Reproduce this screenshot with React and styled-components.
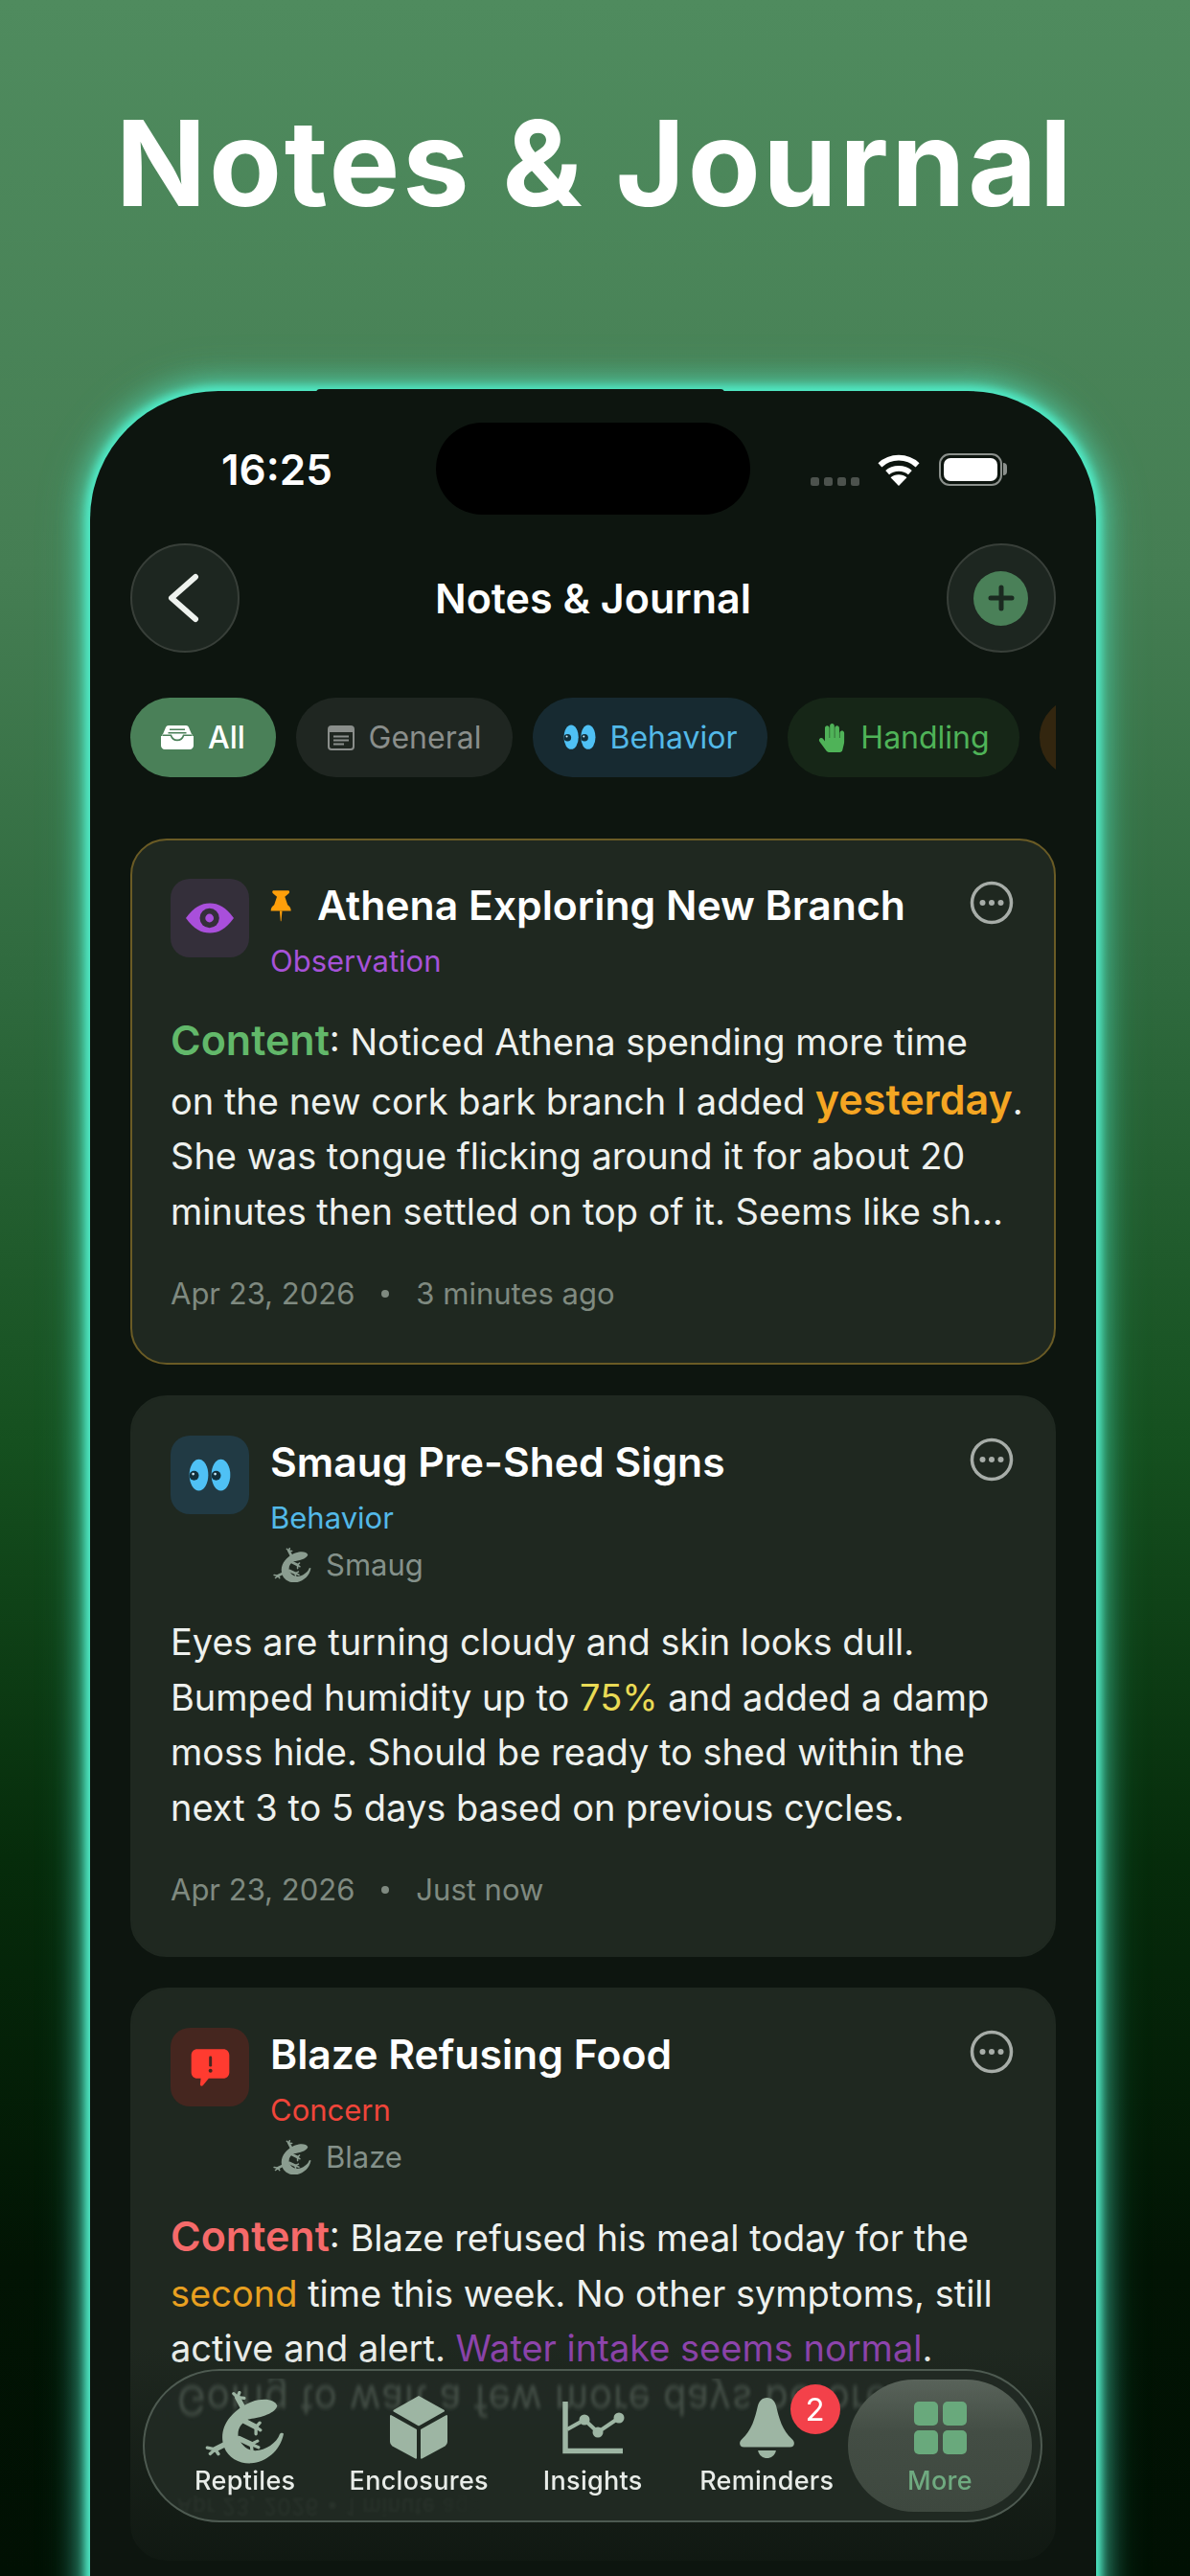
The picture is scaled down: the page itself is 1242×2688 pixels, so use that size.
import React from "react";
import styled, { createGlobalStyle } from "styled-components";
import { FaHandPaper } from "react-icons/fa";

const Global = createGlobalStyle`
  html, body { margin: 0; padding: 0; background: #020f04; }
  * { box-sizing: border-box; }
  body { font-family: Inter, "Noto Sans", sans-serif; -webkit-font-smoothing: antialiased; }
`;

const Page = styled.div`
  width: 1242px;
  height: 2688px;
  overflow: hidden;
  display: flex;
  flex-direction: column;
  background: linear-gradient(180deg, #4f8b5e 0%, #457e53 22%, #2f6a3e 38%, #15501f 56%, #062c0b 72%, #021404 88%, #011003 100%);
`;
const Headline = styled.h1`
  margin: 0;
  height: 408px;
  flex: none;
  padding-top: 100px;
  text-align: center;
  color: #fff;
  font-size: 124px;
  line-height: 140px;
  font-weight: 700;
  letter-spacing: 2.7px;
`;
const Phone = styled.div`
  position: relative;
  flex: none;
  width: 1050px;
  height: 2320px;
  margin-left: 94px;
  background: #0d150f;
  border-radius: 134px 134px 0 0;
  box-shadow: 0 0 9px 5px #50ecc8, 0 0 24px 11px rgba(80, 236, 200, 0.55), 0 0 44px 15px rgba(80, 236, 200, 0.22);
  &::before {
    content: "";
    position: absolute;
    top: -2px;
    left: 236px;
    width: 426px;
    height: 6px;
    border-radius: 4px 4px 0 0;
    background: #0d150f;
  }
`;
const Island = styled.div`
  position: absolute;
  top: 33px;
  left: 361px;
  width: 328px;
  height: 96px;
  border-radius: 48px;
  background: #000;
`;
const StatusBar = styled.div`
  height: 159px;
  padding: 55px 91px 0 137px;
  display: flex;
  justify-content: space-between;
  align-items: flex-start;
  color: #fff;
`;
const Time = styled.span`
  font-size: 44px;
  line-height: 54px;
  font-weight: 600;
`;
const StatusIcons = styled.div`
  display: flex;
  align-items: center;
  height: 54px;
  gap: 18px;
`;
const SignalDots = styled.div`
  display: flex;
  gap: 5px;
  margin-top: 24px;
`;
const SignalDot = styled.i`
  width: 9px;
  height: 9px;
  border-radius: 2.5px;
  background: #4c524d;
`;
const Battery = styled.div`
  position: relative;
  width: 66px;
  height: 34px;
  padding: 3px;
  border: 2px solid #8b908c;
  border-radius: 11px;
  margin-left: 1px;
  margin-right: 7px;
  &::before {
    content: "";
    display: block;
    height: 100%;
    border-radius: 7px;
    background: #fff;
  }
  &::after {
    content: "";
    position: absolute;
    right: -7px;
    top: 8px;
    width: 4px;
    height: 13px;
    border-radius: 0 4px 4px 0;
    background: #8b908c;
  }
`;
const NavBar = styled.div`
  height: 114px;
  margin: 0 42px;
  display: flex;
  align-items: center;
  justify-content: space-between;
`;
const NavTitle = styled.div`
  color: #fff;
  font-size: 43px;
  line-height: 54px;
  font-weight: 600;
`;
const RoundButton = styled.div`
  width: 114px;
  height: 114px;
  border-radius: 50%;
  background: #1d2620;
  border: 2px solid #383f39;
  display: flex;
  align-items: center;
  justify-content: center;
`;
const PlusDisc = styled.div`
  width: 57px;
  height: 57px;
  border-radius: 50%;
  background: #4a8058;
  display: flex;
  align-items: center;
  justify-content: center;
`;
const ChipRow = styled.div`
  margin: 47px 42px 0;
  display: flex;
  gap: 21px;
  overflow: hidden;
`;
const Chip = styled.div`
  flex: none;
  height: 83px;
  width: ${(p) => p.$w}px;
  border-radius: 42px;
  background: ${(p) => p.$bg};
  color: ${(p) => p.$fg};
  display: flex;
  align-items: center;
  justify-content: center;
  gap: ${(p) => p.$gap || 15}px;
  font-size: 32px;
  font-weight: ${(p) => p.$weight || 400};
`;
const CardList = styled.div`
  margin: 64px 42px 0;
  display: flex;
  flex-direction: column;
  gap: 32px;
`;
const Card = styled.article`
  position: relative;
  flex: none;
  border-radius: 38px;
  background: #1f2820;
  border: 2px solid ${(p) => (p.$pinned ? "#6a5b25" : "#1f2820")};
  padding: 40px 40px ${(p) => p.$bottom || 46}px;
`;
const CardHead = styled.div`
  display: flex;
  gap: 22px;
  align-items: flex-start;
`;
const IconTile = styled.div`
  flex: none;
  width: 82px;
  height: 82px;
  border-radius: 20px;
  background: ${(p) => p.$bg};
  display: flex;
  align-items: center;
  justify-content: center;
`;
const HeadText = styled.div`
  flex: 1;
  min-width: 0;
  display: flex;
  flex-direction: column;
`;
const TitleRow = styled.div`
  display: flex;
  align-items: center;
  gap: 26px;
  height: 56px;
`;
const Title = styled.h2`
  margin: 0;
  color: #fff;
  font-size: 42.7px;
  line-height: 56px;
  font-weight: 600;
  white-space: nowrap;
`;
const Kebab = styled.svg`
  position: absolute;
  top: 42px;
  right: 42px;
`;
const Kind = styled.div`
  margin-top: 10px;
  color: ${(p) => p.$c};
  font-size: 31px;
  line-height: 40px;
`;
const PetRow = styled.div`
  display: flex;
  align-items: center;
  gap: 15px;
  margin-top: 8px;
  padding-left: 3px;
  color: #84918a;
  font-size: 31px;
  line-height: 42px;
`;
const Body = styled.p`
  margin: ${(p) => p.$top}px 0 0;
  color: #eef1ee;
  font-size: 38px;
  line-height: 57.5px;
  white-space: nowrap;
`;
const Big = styled.span`
  color: ${(p) => p.$c};
  font-size: 43px;
  font-weight: 600;
  line-height: 1.4;
`;
const Tint = styled.span`
  color: ${(p) => p.$c};
`;
const Meta = styled.div`
  margin-top: 35px;
  display: flex;
  align-items: center;
  gap: 28px;
  color: #7f8a80;
  font-size: 31px;
  line-height: 44px;
`;
const MetaDot = styled.i`
  width: 8px;
  height: 8px;
  border-radius: 50%;
  background: #7f8a80;
`;
const Fade = styled.div`
  position: absolute;
  left: 0;
  right: 0;
  bottom: 40px;
  height: 240px;
  background: linear-gradient(180deg, rgba(13, 21, 15, 0) 0%, rgba(13, 21, 15, 0.35) 35%, rgba(13, 21, 15, 0.85) 100%);
`;
const TabBar = styled.nav`
  position: absolute;
  left: 55px;
  top: 2064px;
  width: 939px;
  height: 160px;
  padding: 9px 9px 9px 14px;
  border-radius: 80px;
  overflow: hidden;
  border: 2px solid rgba(175, 195, 180, 0.32);
  background: rgba(33, 42, 35, 0.93);
  backdrop-filter: blur(14px);
  display: grid;
  grid-template-columns: repeat(4, 181.5px) 1fr;
`;
const Mirror = styled.span`
  position: absolute;
  left: ${(p) => p.$x}px;
  top: ${(p) => p.$y}px;
  transform: scaleY(-1.1);
  font-size: ${(p) => p.$size}px;
  line-height: 1;
  letter-spacing: ${(p) => p.$track}px;
  white-space: nowrap;
  color: ${(p) => p.$c};
  filter: blur(${(p) => p.$blur}px);
  mask-image: linear-gradient(90deg, #000 82%, transparent 100%);
`;
const Tab = styled.div`
  position: relative;
  display: flex;
  flex-direction: column;
  align-items: center;
  padding-top: 10px;
  margin-left: ${(p) => (p.$active ? "-6px" : "0")};
  border-radius: 70px;
  color: ${(p) => (p.$active ? "#6faa80" : "#e8ece8")};
  background: ${(p) => (p.$active ? "linear-gradient(180deg, #59635a 0%, #434d44 40%, #3e483f 100%)" : "transparent")};
`;
const TabIcon = styled.div`
  height: 80px;
  display: flex;
  align-items: center;
  justify-content: center;
  color: #9db5a3;
`;
const TabLabel = styled.span`
  font-size: 27px;
  line-height: 32px;
  font-weight: 500;
  letter-spacing: 0.3px;
`;
const Badge = styled.span`
  position: absolute;
  top: 5px;
  left: 115px;
  width: 52px;
  height: 52px;
  border-radius: 50%;
  background: #f3414a;
  color: #fff;
  font-size: 33px;
  line-height: 52px;
  text-align: center;
`;
const GridIcon = styled.div`
  display: grid;
  grid-template-columns: 25px 25px;
  gap: 5px;
`;
const GridCell = styled.i`
  height: 25px;
  border-radius: 5px;
  background: #69a97c;
`;

const Gecko = ({ w, color = "currentColor" }) => (
  <svg width={w} viewBox="160 105 250 230" fill="none">
    <path
      fill={color}
      d="M387 152C382 134 355 128 328 133C298 138 263 158 238 188C216 214 208 250 220 281C233 316 270 334 305 332C350 329 396 295 407 240C405 235 397 236 395 240C385 270 345 296 310 292C287 287 270 270 264 245C262 222 276 204 296 194C325 190 378 180 387 152Z"
    />
    <g stroke={color} strokeLinecap="round" strokeLinejoin="round">
      <path strokeWidth="17" d="M278 155L262 125M285 200L320 218M268 255L305 272M228 270L192 288" />
      <path strokeWidth="10" d="M250 113L262 125L268 110M262 125L283 127M332 205L320 218L334 228M320 218L320 240M325 262L305 272L328 282M305 272L308 295M167 283L192 288L176 302M192 288L202 303" />
    </g>
  </svg>
);

const Eyes = ({ w }) => (
  <svg width={w} viewBox="110 122 134 104">
    <ellipse cx="142" cy="174" rx="30" ry="50" fill="#4fc1f5" />
    <ellipse cx="212" cy="174" rx="30" ry="50" fill="#4fc1f5" />
    <circle cx="127" cy="176" r="15" fill="#12303c" />
    <circle cx="197" cy="176" r="15" fill="#12303c" />
    <circle cx="124" cy="171" r="4" fill="#cfeefb" />
    <circle cx="194" cy="171" r="4" fill="#cfeefb" />
  </svg>
);

const Tray = () => (
  <svg width="34" height="25" viewBox="0 0 34 25">
    <path fill="#fff" d="M8 0H26C27.5 0 28.5.8 29 2L33 11.5V9.5H23C22 13 20 14.5 17 14.5S12 13 11 9.5H1V11.5L5 2C5.500.8 6.500 0 8 0Z" />
    <path fill="#4a8058" d="M9 3.500H25V5H9ZM7.500 7H26.500V8.500H7.500Z" />
    <path fill="#fff" d="M0 11H9.800C10.800 14.500 13.500 16.300 17 16.300S23.200 14.500 24.200 11H34V21C34 23.200 32.300 25 30 25H4C1.700 25 0 23.200 0 21Z" />
  </svg>
);
const Paper = () => (
  <svg width="28" height="26" viewBox="0 0 28 26">
    <rect x="1" y="1" width="26" height="24" rx="3" fill="#1f2620" stroke="#8a8e8b" strokeWidth="2" />
    <path fill="#8a8e8b" d="M1 4a3 3 0 0 1 3-3h20a3 3 0 0 1 3 3v3H1Z" />
    <path stroke="#8a8e8b" strokeWidth="2" d="M6 11.500H22M6 15.500H22M6 19.500H17" />
  </svg>
);
const Wifi = () => (
  <svg width="46" height="33" viewBox="0 0 44 32" fill="none" stroke="#fff" strokeWidth="5.500">
    <path d="M3 11C13.500 1 30.500 1 41 11" />
    <path d="M10.500 18.500C16.500 13 27.500 13 33.500 18.500" />
    <path fill="#fff" stroke="none" d="M22 32L13.800 23.500C18 19.500 26 19.500 30.200 23.500Z" />
  </svg>
);
const Pin = () => (
  <svg width="23" height="34" viewBox="350 68 72 102">
    <path fill="#ff9f0a" d="M360 70H410C414 70 414 78 410 80L398 90L407 117C412 120 418 127 418 136H352C352 127 358 120 363 117L372 90L360 80C356 78 356 70 360 70Z" />
    <path fill="#ff9f0a" d="M381 136H389L386 170H384Z" />
  </svg>
);
const EyeGlyph = () => (
  <svg width="50" height="32" viewBox="75 112 148 94">
    <path fill="#a94fdb" d="M75 159C100 125 122 113 149 113C176 113 198 125 223 159C198 193 176 205 149 205C122 205 100 193 75 159Z" />
    <circle cx="148" cy="159" r="30" fill="#342f3a" />
    <circle cx="148" cy="159" r="13" fill="#a94fdb" />
  </svg>
);
const AlertGlyph = () => (
  <svg width="41" height="39" viewBox="84 114 122 118">
    <path fill="#ff3b30" d="M104 115H186C197 115 205 123 205 134V188C205 199 197 207 186 207H140L122 229C118 233 112 231 113 225L115 207H104C93 207 85 199 85 188V134C85 123 93 115 104 115Z" />
    <rect x="141" y="137" width="9" height="33" rx="4" fill="#45261f" />
    <circle cx="145.500" cy="183" r="6" fill="#45261f" />
  </svg>
);
const KebabIcon = () => (
  <Kebab width="46" height="46" viewBox="0 0 46 46" fill="none">
    <circle cx="23" cy="23" r="20.500" stroke="#a7ada8" strokeWidth="3.500" />
    <circle cx="13.500" cy="23" r="3" fill="#a7ada8" />
    <circle cx="23" cy="23" r="3" fill="#a7ada8" />
    <circle cx="32.500" cy="23" r="3" fill="#a7ada8" />
  </Kebab>
);
const Cube = () => (
  <svg width="60" height="68" viewBox="748 120 180 200" fill="currentColor" stroke="currentColor" strokeWidth="6" strokeLinejoin="round">
    <path d="M838 124L916 168L838 212L761 168Z" />
    <path d="M751 184L829 228V315L757 276C753 273 751 270 751 265Z" />
    <path d="M925 184L847 228V315L919 276C923 273 925 270 925 265Z" />
  </svg>
);
const Chart = () => (
  <svg width="66" height="58" viewBox="0 0 66 58" fill="none" stroke="currentColor">
    <path strokeWidth="5.500" d="M4 2V53.500H64" />
    <path strokeWidth="4" d="M6 31L24 21L38 34L60 19" />
    <g fill="currentColor" stroke="none">
      <circle cx="24" cy="21" r="5.500" />
      <circle cx="38" cy="34" r="5.500" />
      <circle cx="60" cy="19" r="5.500" />
    </g>
  </svg>
);
const Bell = () => (
  <svg width="57" height="63" viewBox="338 128 170 188" fill="currentColor">
    <path d="M423 128C440 128 448 140 452 155C460 190 470 230 502 258C512 268 508 282 495 282H351C338 282 334 268 344 258C376 230 386 190 394 155C398 140 406 128 423 128Z" />
    <path d="M395 292H451C448 308 435 316 423 316C411 316 398 308 395 292Z" />
  </svg>
);

export default function App() {
  return (
    <>
      <Global />
      <Page>
        <Headline>Notes &amp; Journal</Headline>
        <Phone>
          <Island />
          <StatusBar>
            <Time>16:25</Time>
            <StatusIcons>
              <SignalDots>
                <SignalDot /><SignalDot /><SignalDot /><SignalDot />
              </SignalDots>
              <Wifi />
              <Battery />
            </StatusIcons>
          </StatusBar>
          <NavBar>
            <RoundButton>
              <svg width="38" height="52" viewBox="0 0 38 52" fill="none" stroke="#eef2ee" strokeWidth="6" strokeLinecap="round" strokeLinejoin="round">
                <path d="M30 4L5 26L30 48" />
              </svg>
            </RoundButton>
            <NavTitle>Notes &amp; Journal</NavTitle>
            <RoundButton>
              <PlusDisc>
                <svg width="28" height="28" viewBox="0 0 28 28" stroke="#1b2a20" strokeWidth="5" strokeLinecap="round">
                  <path d="M14 3V25M3 14H25" />
                </svg>
              </PlusDisc>
            </RoundButton>
          </NavBar>
          <ChipRow>
            <Chip $w={152} $bg="#4a8058" $fg="#fff" $weight={500}><Tray />All</Chip>
            <Chip $w={226} $bg="#1f2621" $fg="#8a8e8b"><Paper />General</Chip>
            <Chip $w={245} $bg="#172a31" $fg="#53b9e8"><Eyes w={34} />Behavior</Chip>
            <Chip $w={242} $bg="#162617" $fg="#4fb358"><FaHandPaper size={30} />Handling</Chip>
            <Chip $w={200} $bg="#33260f" $fg="#e8a020" />
          </ChipRow>
          <CardList>
            <Card $pinned $bottom={50}>
              <CardHead>
                <IconTile $bg="#342f3a"><EyeGlyph /></IconTile>
                <HeadText>
                  <TitleRow>
                    <Pin />
                    <Title>Athena Exploring New Branch</Title>
                  </TitleRow>
                  <Kind $c="#a652d8">Observation</Kind>
                </HeadText>
                <KebabIcon />
              </CardHead>
              <Body $top={32}>
                <Big $c="#62b86a">Content</Big>: Noticed Athena spending more time<br />
                on the new cork bark branch I added <Big $c="#f5a623">yesterday</Big>.<br />
                She was tongue flicking around it for about 20<br />
                minutes then settled on top of it. Seems like sh...
              </Body>
              <Meta><span>Apr 23, 2026</span><MetaDot /><span>3 minutes ago</span></Meta>
            </Card>
            <Card>
              <CardHead>
                <IconTile $bg="#213a44"><Eyes w={44} /></IconTile>
                <HeadText>
                  <TitleRow><Title>Smaug Pre-Shed Signs</Title></TitleRow>
                  <Kind $c="#53b9e8">Behavior</Kind>
                  <PetRow><Gecko w={40} color="#8b9d90" />Smaug</PetRow>
                </HeadText>
                <KebabIcon />
              </CardHead>
              <Body $top={31}>
                Eyes are turning cloudy and skin looks dull.<br />
                Bumped humidity up to <Tint $c="#eadb55">75%</Tint> and added a damp<br />
                moss hide. Should be ready to shed within the<br />
                next 3 to 5 days based on previous cycles.
              </Body>
              <Meta><span>Apr 23, 2026</span><MetaDot /><span>Just now</span></Meta>
            </Card>
            <Card $bottom={190}>
              <CardHead>
                <IconTile $bg="#45261f"><AlertGlyph /></IconTile>
                <HeadText>
                  <TitleRow><Title>Blaze Refusing Food</Title></TitleRow>
                  <Kind $c="#f0453a">Concern</Kind>
                  <PetRow><Gecko w={40} color="#8b9d90" />Blaze</PetRow>
                </HeadText>
                <KebabIcon />
              </CardHead>
              <Body $top={31}>
                <Big $c="#f56a6a">Content</Big>: Blaze refused his meal today for the<br />
                <Tint $c="#e8a020">second</Tint> time this week. No other symptoms, still<br />
                active and alert. <Tint $c="#8e44ad">Water intake seems normal</Tint>.
              </Body>
            </Card>
          </CardList>
          <Fade />
          <TabBar>
            <Mirror $x={34} $y={10} $size={40} $track={1} $c="rgba(210,225,215,0.2)" $blur={1.7} aria-hidden="true">Going to wait a few more days before sche</Mirror>
            <Mirror $x={34} $y={131} $size={22} $track={1} $c="rgba(215,230,220,0.05)" $blur={1.5} aria-hidden="true">Apr 23, 2026  •  1 minute ago</Mirror>
            <Tab><TabIcon><Gecko w={83} /></TabIcon><TabLabel>Reptiles</TabLabel></Tab>
            <Tab><TabIcon><Cube /></TabIcon><TabLabel>Enclosures</TabLabel></Tab>
            <Tab><TabIcon><Chart /></TabIcon><TabLabel>Insights</TabLabel></Tab>
            <Tab><TabIcon><Bell /></TabIcon><TabLabel>Reminders</TabLabel><Badge>2</Badge></Tab>
            <Tab $active>
              <TabIcon><GridIcon><GridCell /><GridCell /><GridCell /><GridCell /></GridIcon></TabIcon>
              <TabLabel>More</TabLabel>
            </Tab>
          </TabBar>
        </Phone>
      </Page>
    </>
  );
}
